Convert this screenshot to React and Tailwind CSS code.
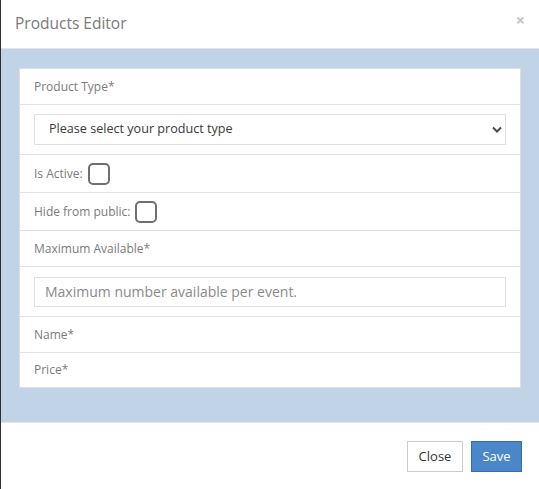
import React from 'react';

const Checkbox = () => (
  <span className="inline-block h-[22px] w-[22px] rounded-[5px] border-2 border-[#6f6f6f] bg-white"></span>
);

export default function App() {
  return (
    <div className="flex h-[489px] w-[539px] flex-col overflow-hidden border-l border-[#2f2f2f] bg-white font-['Open_Sans',sans-serif]">
      {/* Header */}
      <div className="flex h-[49px] shrink-0 items-center justify-between border-b border-[#e5e5e5] pl-[14px] pr-[14px]">
        <h4 className="text-[15.5px] text-[#7a7a7a]">Products Editor</h4>
        <button className="mb-[8px] text-[16px] font-bold leading-none text-[#c4c4c4]">×</button>
      </div>

      {/* Body */}
      <div className="h-[373px] shrink-0 bg-[#c1d3e7] px-[18px] pt-[19px]">
        <div className="border border-[#dedede] bg-white text-[12px] text-[#7b7b7b]">
          <div className="flex h-[36px] items-center border-b border-[#e2e2e2] px-[14px]">Product Type*</div>
          <div className="flex h-[50px] items-center border-b border-[#e2e2e2] px-[14px]">
            <div className="flex h-[31px] w-full items-center justify-between border border-[#e0e0e0] pl-[14px] pr-[3px] text-[12.6px] text-[#3a3a3a]">
              <span>Please select your product type</span>
              <svg width="10" height="7" viewBox="0 0 10 7" fill="none">
                <path d="M1 1.5l4 4 4-4" stroke="#4a4a4a" strokeWidth="2" />
              </svg>
            </div>
          </div>
          <div className="flex h-[38px] items-center gap-[5px] border-b border-[#e2e2e2] px-[14px]">
            <span>Is Active:</span>
            <Checkbox />
          </div>
          <div className="flex h-[38px] items-center gap-[5px] border-b border-[#e2e2e2] px-[14px]">
            <span>Hide from public:</span>
            <Checkbox />
          </div>
          <div className="flex h-[36px] items-center border-b border-[#e2e2e2] px-[14px]">Maximum Available*</div>
          <div className="flex h-[50px] items-center border-b border-[#e2e2e2] px-[14px]">
            <div className="flex h-[30px] w-full items-center border border-[#e0e0e0] px-[10px] text-[14px] text-[#8a8a8a]">
              Maximum number available per event.
            </div>
          </div>
          <div className="flex h-[36px] items-center border-b border-[#e2e2e2] px-[14px]">Name*</div>
          <div className="flex h-[34px] items-center px-[14px]">Price*</div>
        </div>
      </div>

      {/* Footer */}
      <div className="flex flex-1 items-start justify-end gap-[8px] border-t border-[#e5e5e5] pr-[17px] pt-[18px]">
        <button className="h-[31px] w-[56px] border border-[#cccccc] bg-white text-[13px] text-[#333]">Close</button>
        <button className="h-[31px] w-[51px] border border-[#2f6eb0] bg-[#4a86c9] text-[13px] text-white">Save</button>
      </div>
    </div>
  );
}
